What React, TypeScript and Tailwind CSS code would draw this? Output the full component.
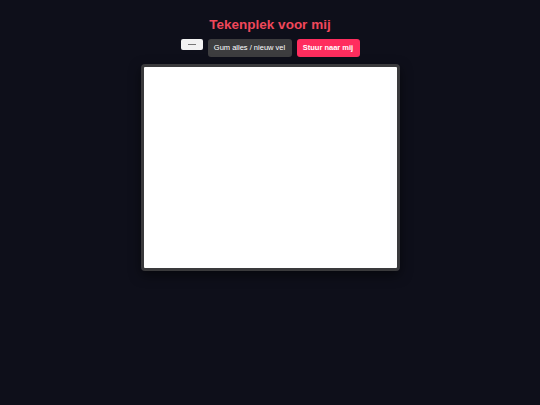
import React from 'react';

const App = () => {
    return (
        <div className="min-h-screen w-full bg-[#0e0f1a] flex flex-col items-center pt-[16px]" style={{ fontFamily: '"Liberation Sans", Arial, sans-serif' }}>
            <h1 className="text-[13.5px] leading-[17px] font-bold text-[#f0475a]">Tekenplek voor mij</h1>
            <div className="flex items-start gap-[5px] mt-[6px]">
                <div className="w-[22px] h-[11px] bg-[#f2f2f2] rounded-[2px] flex items-center justify-center">
                    <div className="w-[8px] h-[1px] bg-[#777]" />
                </div>
                <button className="h-[18px] w-[84px] rounded-[3px] bg-[#3d3d3f] text-white text-[7.5px]">Gum alles / nieuw vel</button>
                <button className="h-[18px] w-[63px] rounded-[3px] bg-[#ff2d5e] text-white text-[7.5px] font-bold">Stuur naar mij</button>
            </div>
            <div className="mt-[7px] border-[3px] border-[#3a3a3c] rounded-[4px] bg-white w-[259px] h-[207px] shadow-[0_4px_12px_rgba(0,0,0,0.5)]" />
        </div>
    );
};

export default App;
